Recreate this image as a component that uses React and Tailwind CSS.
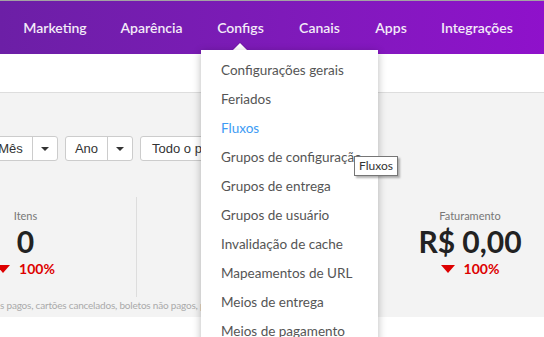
import React from "react";

const navItems = [
  { label: "Marketing", w: "w-[96px]" },
  { label: "Aparência", w: "w-[97px]" },
  { label: "Configs", w: "w-[81px]" },
  { label: "Canais", w: "w-[77px]" },
  { label: "Apps", w: "w-[66px]" },
  { label: "Integrações", w: "w-[106px]" },
];

const menuItems = [
  "Configurações gerais",
  "Feriados",
  "Fluxos",
  "Grupos de configuração",
  "Grupos de entrega",
  "Grupos de usuário",
  "Invalidação de cache",
  "Mapeamentos de URL",
  "Meios de entrega",
  "Meios de pagamento",
  "Pontos de retirada",
];

function SplitButton({ label, mainW }) {
  return (
    <div className="flex h-[25px] shrink-0 rounded-[3px] border border-[#cccccc] bg-white text-[13px] text-[#333] font-['Liberation_Sans',Arial,sans-serif]">
      <div className={`flex items-center justify-center ${mainW} border-r border-[#cccccc]`}>{label}</div>
      <div className="flex w-[24px] items-center justify-center">
        <span className="block h-0 w-0 border-x-[4px] border-t-[4px] border-x-transparent border-t-[#333]" />
      </div>
    </div>
  );
}

function Stat({ label, value, bordered }) {
  return (
    <div className={`flex w-[222px] shrink-0 flex-col items-center pt-[12px] ${bordered ? "border-r border-[#dddddd]" : ""}`}>
      <span className="text-[11px] leading-[14px] text-[#777]">{label}</span>
      <span className="mt-[1px] text-[30px] font-bold leading-[34px] text-[#222]">{value}</span>
      <div className="mt-[2px] flex items-center gap-[9px]">
        <span className="block h-0 w-0 border-x-[7px] border-t-[8px] border-x-transparent border-t-[#dd0000]" />
        <span className="text-[14px] font-bold leading-[18px] text-[#dd0000]">100%</span>
      </div>
    </div>
  );
}

export default function App() {
  return (
    <div className="relative h-[337px] w-[544px] overflow-hidden bg-white font-['Lato',sans-serif]">
      <header className="flex h-[54px] items-center border-t border-[#a3a3a3] bg-gradient-to-r from-[#6c1fa6] to-[#8f11cb] pl-[7px]">
        {navItems.map((item) => (
          <div
            key={item.label}
            className={`${item.w} shrink-0 text-center text-[14px] font-semibold text-[#f3ebf8]`}
          >
            {item.label}
          </div>
        ))}
      </header>

      <div className="h-[39px] border-b border-[#dddddd]" />

      <section className="h-[224px] bg-[#f3f3f3] pt-[43px]">
        <div className="-ml-[12px] flex gap-[7px]">
          <SplitButton label="Mês" mainW="w-[44px]" />
          <SplitButton label="Ano" mainW="w-[42px]" />
          <div className="flex h-[25px] shrink-0 items-center rounded-[3px] border border-[#cccccc] bg-white pl-[11px] pr-[12px] text-[13px] text-[#333] font-['Liberation_Sans',Arial,sans-serif]">
            Todo o período
          </div>
        </div>

        <div className="-ml-[85px] mt-[36px] flex h-[100px]">
          <Stat label="Itens" value="0" bordered />
          <Stat label="Pedidos" value="0" bordered />
          <Stat label="Faturamento" value="R$ 0,00" />
        </div>

        <p className="mt-[1px] whitespace-nowrap text-[10px] leading-[14px] tracking-[-0.2px] text-[#aaa]">
          s pagos, cartões cancelados, boletos não pagos, pedidos em análise
        </p>
      </section>

      {/* dropdown do menu Configs */}
      <div className="absolute left-[233px] top-[43px] h-0 w-0 border-x-[7px] border-b-[7px] border-x-transparent border-b-white drop-shadow-[0_-1px_0_rgba(0,0,0,0.12)]" />
      <div className="absolute left-[201px] top-[50px] w-[177px] bg-white pt-[6px] shadow-[0_2px_8px_rgba(0,0,0,0.28)]">
        {menuItems.map((item) => (
          <div
            key={item}
            className={`h-[29px] whitespace-nowrap pl-[20px] text-[13.5px] leading-[29px] ${
              item === "Fluxos" ? "text-[#3d9bf4]" : "text-[#555]"
            }`}
          >
            {item}
          </div>
        ))}
      </div>

      {/* tooltip */}
      <div className="absolute left-[354px] top-[156px] flex h-[20px] w-[44px] items-center justify-center border border-[#767676] bg-white text-[12px] text-[#333] shadow-[2px_2px_2px_rgba(0,0,0,0.3)]">
        Fluxos
      </div>
    </div>
  );
}
